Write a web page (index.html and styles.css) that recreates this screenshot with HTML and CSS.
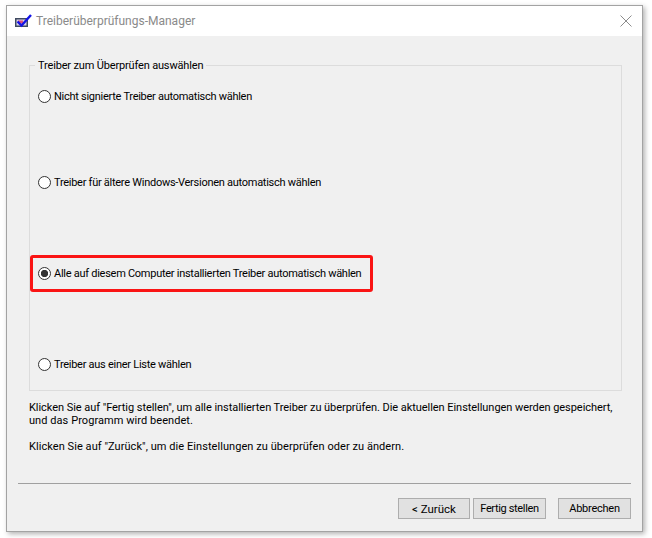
FILE: index.html
```html
<!DOCTYPE html>
<html lang="de">
<head>
<meta charset="utf-8">
<title>Treiberüberprüfungs-Manager</title>
<link rel="stylesheet" href="styles.css">
</head>
<body>
<div class="window">
  <header class="titlebar">
    <svg class="app-icon" width="18" height="16" viewBox="0 0 18 16">
      <rect x="0" y="5" width="13" height="9" fill="#3f4a60"/>
      <rect x="1.5" y="6.5" width="10" height="6" fill="#d8d4e8"/>
      <rect x="3" y="7.5" width="5" height="3" fill="#e0507a"/>
      <path d="M2.5 8.5 L6.5 12.5 L16 2" fill="none" stroke="#1414e6" stroke-width="2.4"/>
    </svg>
    <span class="title">Treiberüberprüfungs-Manager</span>
    <svg class="close" width="12" height="12" viewBox="0 0 12 12">
      <path d="M.5 .5 L11.5 11.5 M11.5 .5 L.5 11.5" stroke="#8c8c8c" stroke-width="1" fill="none"/>
    </svg>
  </header>
  <main class="content">
    <fieldset class="group">
      <legend class="legend">Treiber zum Überprüfen auswählen</legend>
      <label class="option opt-1"><input type="radio" name="drv" class="radio"><span>Nicht signierte Treiber automatisch wählen</span></label>
      <label class="option opt-2"><input type="radio" name="drv" class="radio"><span>Treiber für ältere Windows-Versionen automatisch wählen</span></label>
      <label class="option opt-3 marked"><input type="radio" name="drv" class="radio" checked><span>Alle auf diesem Computer installierten Treiber automatisch wählen</span></label>
      <label class="option opt-4"><input type="radio" name="drv" class="radio"><span>Treiber aus einer Liste wählen</span></label>
    </fieldset>
    <div class="notes">
      <p class="note">Klicken Sie auf "Fertig stellen", um alle installierten Treiber zu überprüfen. Die aktuellen Einstellungen werden gespeichert,<br><span class="loose">und das Programm wird beendet.</span></p>
      <p class="note loose">Klicken Sie auf "Zurück", um die Einstellungen zu überprüfen oder zu ändern.</p>
    </div>
    <hr class="separator">
    <div class="buttons">
      <button class="btn back">&lt; Zurück</button>
      <button class="btn finish">Fertig stellen</button>
      <button class="btn cancel">Abbrechen</button>
    </div>
  </main>
</div>
</body>
</html>
```
FILE: styles.css
```css
* { box-sizing: border-box; }
html, body { margin: 0; height: 100%; background: #fff; overflow: hidden; }
body {
  padding: 5px 8px 6px 6px;
  font-family: Roboto, "Liberation Sans", Arial, sans-serif;
  font-size: 11px;
  color: #000;
}
.window {
  width: 637px;
  height: 527px;
  border: 1px solid #a3a3a3;
  background: #f0f0f0;
  box-shadow: 2px 2px 5px rgba(0,0,0,.3);
  display: flex;
  flex-direction: column;
}
.titlebar {
  height: 30px;
  background: #fff;
  display: flex;
  align-items: center;
  padding: 0 10px 0 8px;
  flex: none;
}
.app-icon { margin-right: 3px; }
.title { color: #8a8a8a; font-size: 12px; flex: 1; }
.close { display: block; }
.content { flex: 1; display: flex; flex-direction: column; padding: 0 11px 11px 11px; }
.group {
  margin: 22px 9px 0 11px;
  padding: 0;
  height: 333px;
  border: 1px solid #dcdcdc;
  min-width: 0;
}
.legend { margin-left: 5px; padding: 0 3px; line-height: 15px; letter-spacing: -.16px; }
.option { display: flex; align-items: center; line-height: 15px; height: 16px; padding-left: 7px; white-space: nowrap; letter-spacing: -.27px; }
.radio {
  appearance: none;
  width: 13px;
  height: 13px;
  margin: 0 3px 0 1px;
  border: 1px solid #333;
  border-radius: 50%;
  background: #fff;
  flex: none;
}
.radio:checked { background: radial-gradient(circle, #333 0 3.4px, #fff 3.9px); }
.opt-1 { margin-top: 15px; }
.opt-2 { margin-top: 70px; }
.opt-4 { margin-top: 64px; }
.marked {
  height: 37px;
  margin: 65px 0 0 0;
  width: 343px;
  padding-left: 4px;
  border: 3px solid #fa1414;
  border-radius: 3px;
}
.notes { margin: 10px 11px 0 11px; height: 82px; }
.note { margin: 0 0 13px; line-height: 13px; white-space: nowrap; letter-spacing: -.05px; }
.loose { letter-spacing: .06px; }
.separator { margin: 0; border: 0; border-top: 1px solid #a0a0a0; height: 1px; flex: none; }
.buttons { display: flex; justify-content: flex-end; margin-top: 14px; }
.btn {
  height: 21px;
  padding: 0;
  border: 1px solid #adadad;
  background: #e1e1e1;
  font: inherit;
  color: #000;
}
.back { width: 72px; font-size: 11.5px; }
.finish { width: 73px; margin-left: 3px; letter-spacing: -.35px; }
.cancel { width: 73px; margin-left: 12px; letter-spacing: -.25px; }
```
